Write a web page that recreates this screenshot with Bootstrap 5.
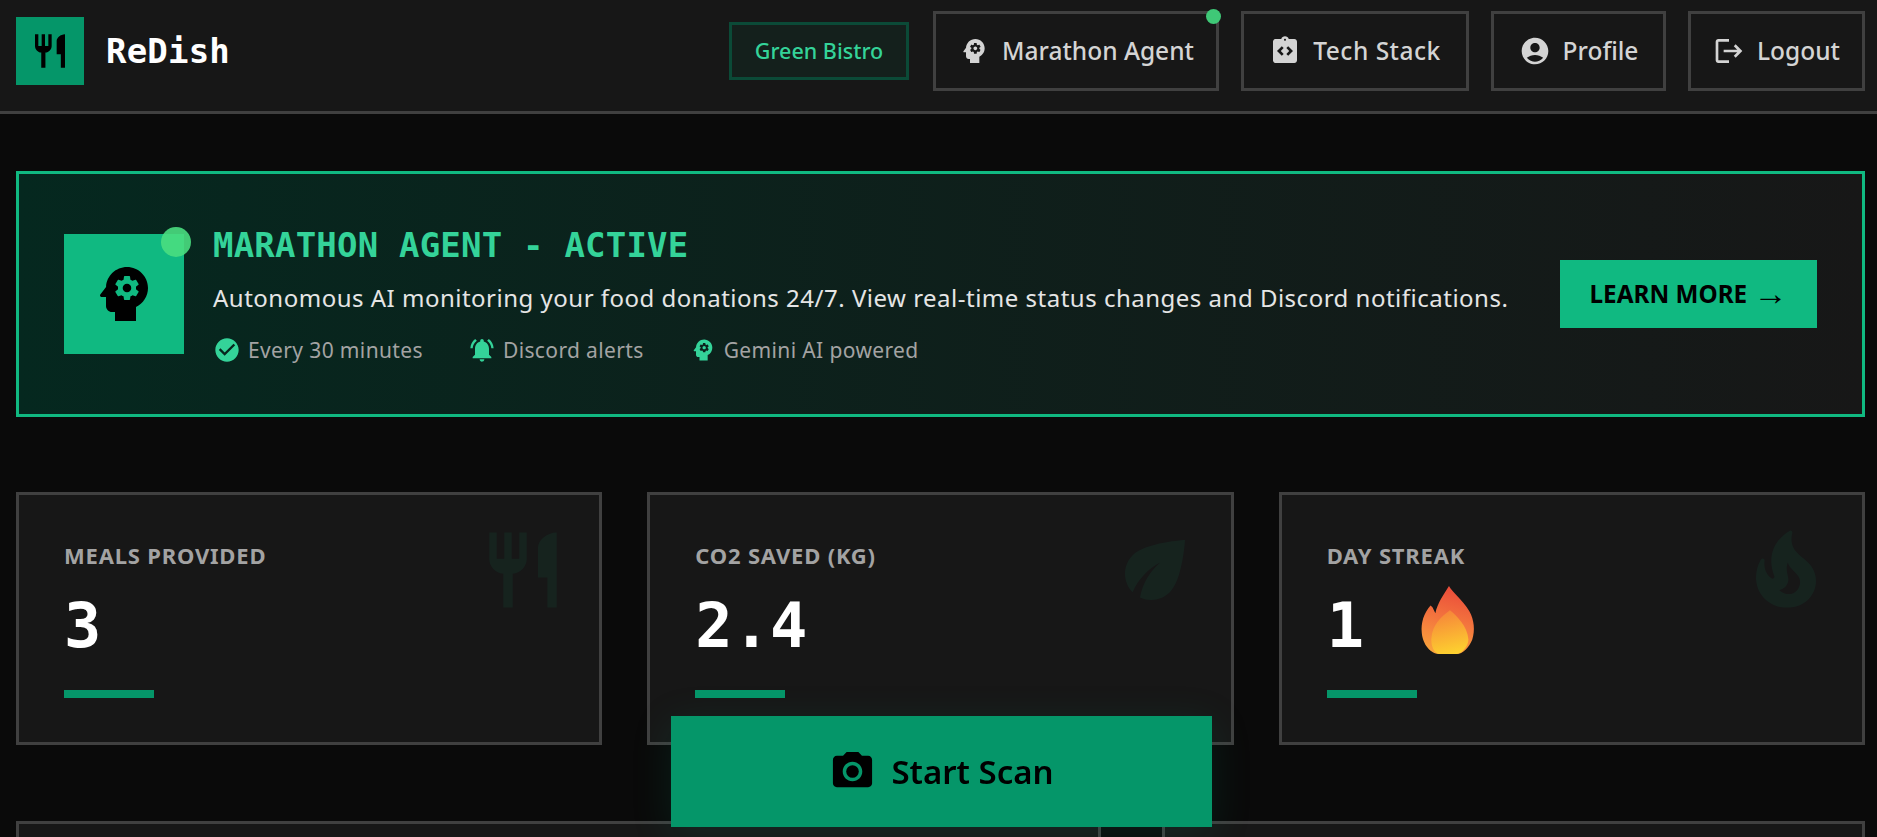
<!DOCTYPE html>
<html lang="en">
<head>
<meta charset="UTF-8" />
<title>ReDish</title>
<link href="https://cdn.jsdelivr.net/npm/bootstrap@5.3.0/dist/css/bootstrap.min.css" rel="stylesheet" />
<style>
  html, body { height: 100%; overflow: hidden; }
  body { background: #0a0a0a; color: #e5e5e5; font-family: "Noto Sans", "Liberation Sans", sans-serif; }
  .app-header { background: #171717; border-bottom: 3px solid #404040; height: 114px; padding: 11px 12px 20px 16px; }
  .logo-box { width: 68px; height: 68px; background: #059669; }
  .logo-box svg { width: 40px; height: 40px; }
  .brand-name { font-family: "DejaVu Sans Mono", monospace; font-weight: 700; font-size: 34px; color: #fff; margin-left: 22px; letter-spacing: .2px; }
  .org-tag { width: 180px; height: 58px; border: 3px solid #0b4a37; background: #14201c; color: #34d399; font-size: 21.5px; font-weight: 500; margin-right: 24px; }
  .head-btn { height: 80px; padding: 0; border: 3px solid #404040; background: transparent; color: #d4d4d4; font-size: 24.5px; font-weight: 500; gap: 12px; margin-left: 22px; border-radius: 0; }
  .head-btn svg { width: 32px; height: 32px; fill: #d4d4d4; }
  .head-btn:first-of-type { margin-left: 0; }
  .btn-agent { width: 286px; }
  .btn-stack { width: 228px; }
  .btn-profile { width: 175px; }
  .btn-logout { width: 177px; }
  .btn-stack span { letter-spacing: .5px; }
  .live-dot { position: absolute; width: 15px; height: 15px; border-radius: 50%; background: #3fc877; top: -5px; right: -5px; }
  .page-main { padding: 57px 12px 0 16px; }
  .agent-banner { height: 246px; border: 3px solid #10b981; background: linear-gradient(90deg, #05281f 0%, #171717 100%); padding: 0 45px; }
  .agent-icon { width: 120px; height: 120px; background: #10b981; margin-right: 29px; flex: none; }
  .agent-icon svg { width: 72px; height: 72px; }
  .agent-dot { position: absolute; width: 30px; height: 30px; border-radius: 50%; background: #4ade80; opacity: .9; top: -7px; right: -7px; }
  .agent-text { padding-top: 3px; }
  .agent-title { font-family: "DejaVu Sans Mono", monospace; font-weight: 700; font-size: 34px; letter-spacing: .2px; color: #34d399; line-height: 40px; margin-bottom: 17px; }
  .agent-desc { font-size: 24px; letter-spacing: .5px; line-height: 32px; color: #e5e5e5; margin-bottom: 20px; }
  .agent-meta { font-size: 21px; letter-spacing: .37px; line-height: 32px; color: #a3a3a3; gap: 45px; }
  .agent-meta svg { width: 28px; height: 28px; fill: #34d399; margin-right: 7px; }
  .learn-btn { width: 257px; height: 68px; background: #10b981; color: #000; font-size: 24.3px; font-weight: 700; border: 0; border-radius: 0; flex: none; }
  .learn-arrow { font-family: "Liberation Serif", serif; font-weight: 400; font-size: 34px; line-height: 1; vertical-align: -2px; }
  .stat-grid { display: grid; grid-template-columns: repeat(3, 1fr); gap: 45px; margin-top: 75px; }
  .stat-box { position: relative; height: 253px; background: #171717; border: 3px solid #404040; padding: 45px; }
  .stat-label { font-size: 22px; letter-spacing: .8px; font-weight: 700; color: #a3a3a3; line-height: 30px; text-transform: uppercase; }
  .stat-value { font-family: "DejaVu Sans Mono", monospace; font-weight: 700; font-size: 62px; line-height: 75px; color: #fff; margin-top: 18px; height: 75px; gap: 56px; }
  .stat-value svg { width: 56px; height: 68px; margin-bottom: 12px; }
  .stat-bar { width: 90px; height: 8px; background: #059669; margin-top: 27px; }
  .stat-bg { position: absolute; top: 30px; right: 31px; width: 90px; height: 90px; fill: #10b981; opacity: .07; }
  .lower-grid { display: grid; grid-template-columns: 1085px 703px; gap: 61px; margin-top: 76px; }
  .lower-box { height: 300px; background: #171717; border: 3px solid #404040; }
  .scan-btn { position: fixed; left: 671px; bottom: 10px; width: 541px; height: 111px; background: #059669; color: #000; border: 0; border-radius: 0; font-size: 33px; font-weight: 600; gap: 15px; box-shadow: 0 8px 40px rgba(5,150,105,.15); }
  .scan-btn svg { width: 47px; height: 47px; }
</style>
</head>
<body>
  <header class="app-header d-flex align-items-center justify-content-between">
    <div class="d-flex align-items-center">
      <div class="logo-box d-flex align-items-center justify-content-center">
        <svg viewBox="0 0 24 24"><path d="M11 9H9V2H7v7H5V2H3v7c0 2.12 1.66 3.84 3.75 3.97V22h2.5v-9.03C11.34 12.84 13 11.12 13 9V2h-2v7zm5-3v8h2.5v8H21V2c-2.76 0-5 2.24-5 4z"/></svg>
      </div>
      <span class="brand-name">ReDish</span>
    </div>
    <div class="d-flex align-items-center">
      <span class="org-tag d-flex align-items-center justify-content-center">Green Bistro</span>
      <button class="btn head-btn btn-agent d-flex align-items-center justify-content-center position-relative">
        <svg viewBox="0 0 24 24"><path d="M13 8.57c-.79 0-1.43.64-1.43 1.43s.64 1.43 1.43 1.43 1.43-.64 1.43-1.43-.64-1.43-1.43-1.43z"/><path d="M13 3C9.25 3 6.2 5.94 6.02 9.64L4.1 12.2c-.25.33-.01.8.4.8H6v3c0 1.1.9 2 2 2h1v3h7v-4.68c2.36-1.12 4-3.53 4-6.32 0-3.87-3.13-7-7-7zm3 7c0 .13-.01.26-.02.39l.83.66c.08.06.1.16.05.25l-.8 1.39c-.05.09-.16.12-.24.09l-.99-.4c-.21.16-.43.29-.67.39L14 13.83c-.01.1-.1.17-.2.17h-1.6c-.1 0-.18-.07-.2-.17l-.15-1.06c-.25-.1-.47-.23-.68-.39l-.99.4c-.09.03-.2 0-.25-.09l-.8-1.39c-.05-.08-.03-.19.05-.25l.84-.66c-.01-.13-.02-.26-.02-.39s.02-.27.04-.39l-.85-.66c-.08-.06-.1-.16-.05-.26l.8-1.38c.05-.09.15-.12.24-.09l1 .4c.2-.15.43-.29.67-.39l.15-1.06c.02-.1.1-.17.2-.17h1.6c.1 0 .18.07.2.17l.15 1.06c.24.1.46.23.67.39l1-.4c.09-.03.2 0 .24.09l.8 1.38c.05.09.03.2-.05.26l-.85.66c.03.12.04.25.04.39z"/></svg>
        <span>Marathon Agent</span><span class="live-dot"></span>
      </button>
      <button class="btn head-btn btn-stack d-flex align-items-center justify-content-center">
        <svg viewBox="0 0 24 24"><path d="M19 3h-4.18C14.4 1.84 13.3 1 12 1c-1.3 0-2.4.84-2.82 2H5c-.14 0-.27.01-.4.04-.39.08-.74.28-1.01.55-.18.18-.33.4-.43.64-.1.23-.16.49-.16.77v14c0 .27.06.54.16.78s.25.45.43.64c.27.27.62.47 1.01.55.13.02.26.03.4.03h14c1.1 0 2-.9 2-2V5c0-1.1-.9-2-2-2zm-8 11.17-1.41 1.42L6 12l3.59-3.59L11 9.83 8.83 12 11 14.17zm1-9.92c-.41 0-.75-.34-.75-.75s.34-.75.75-.75.75.34.75.75-.34.75-.75.75zm2.41 11.34L13 14.17 15.17 12 13 9.83l1.41-1.42L18 12l-3.59 3.59z"/></svg>
        <span>Tech Stack</span>
      </button>
      <button class="btn head-btn btn-profile d-flex align-items-center justify-content-center">
        <svg viewBox="0 0 24 24"><path d="M12 2C6.48 2 2 6.48 2 12s4.48 10 10 10 10-4.48 10-10S17.52 2 12 2zm0 4c1.93 0 3.5 1.57 3.5 3.5S13.93 13 12 13s-3.5-1.57-3.5-3.5S10.07 6 12 6zm0 14c-2.03 0-4.43-.82-6.14-2.88C7.55 15.8 9.68 15 12 15s4.45.8 6.14 2.12C16.43 19.18 14.03 20 12 20z"/></svg>
        <span>Profile</span>
      </button>
      <button class="btn head-btn btn-logout d-flex align-items-center justify-content-center">
        <svg viewBox="0 0 24 24"><path d="M17 7l-1.41 1.41L18.17 11H8v2h10.17l-2.58 2.58L17 17l5-5zM4 5h8V3H4c-1.1 0-2 .9-2 2v14c0 1.1.9 2 2 2h8v-2H4V5z"/></svg>
        <span>Logout</span>
      </button>
    </div>
  </header>

  <main class="page-main">
    <section class="agent-banner d-flex align-items-center justify-content-between">
      <div class="d-flex align-items-center">
        <div class="agent-icon position-relative d-flex align-items-center justify-content-center">
          <svg viewBox="0 0 24 24"><path d="M13 8.57c-.79 0-1.43.64-1.43 1.43s.64 1.43 1.43 1.43 1.43-.64 1.43-1.43-.64-1.43-1.43-1.43z"/><path d="M13 3C9.25 3 6.2 5.94 6.02 9.64L4.1 12.2c-.25.33-.01.8.4.8H6v3c0 1.1.9 2 2 2h1v3h7v-4.68c2.36-1.12 4-3.53 4-6.32 0-3.87-3.13-7-7-7zm3 7c0 .13-.01.26-.02.39l.83.66c.08.06.1.16.05.25l-.8 1.39c-.05.09-.16.12-.24.09l-.99-.4c-.21.16-.43.29-.67.39L14 13.83c-.01.1-.1.17-.2.17h-1.6c-.1 0-.18-.07-.2-.17l-.15-1.06c-.25-.1-.47-.23-.68-.39l-.99.4c-.09.03-.2 0-.25-.09l-.8-1.39c-.05-.08-.03-.19.05-.25l.84-.66c-.01-.13-.02-.26-.02-.39s.02-.27.04-.39l-.85-.66c-.08-.06-.1-.16-.05-.26l.8-1.38c.05-.09.15-.12.24-.09l1 .4c.2-.15.43-.29.67-.39l.15-1.06c.02-.1.1-.17.2-.17h1.6c.1 0 .18.07.2.17l.15 1.06c.24.1.46.23.67.39l1-.4c.09-.03.2 0 .24.09l.8 1.38c.05.09.03.2-.05.26l-.85.66c.03.12.04.25.04.39z"/></svg>
          <span class="agent-dot"></span>
        </div>
        <div class="agent-text">
          <div class="agent-title">MARATHON AGENT - ACTIVE</div>
          <div class="agent-desc">Autonomous AI monitoring your food donations 24/7. View real-time status changes and Discord notifications.</div>
          <div class="agent-meta d-flex">
            <span class="d-flex align-items-center"><svg viewBox="0 0 24 24"><path d="M12 2C6.48 2 2 6.48 2 12s4.48 10 10 10 10-4.48 10-10S17.52 2 12 2zm-2 15l-5-5 1.41-1.41L10 14.17l7.59-7.59L19 8l-9 9z"/></svg>Every 30 minutes</span>
            <span class="d-flex align-items-center"><svg viewBox="0 0 24 24"><path d="M7.58 4.08L6.15 2.65C3.75 4.48 2.17 7.3 2.03 10.5h2c.15-2.65 1.51-4.97 3.55-6.42zm12.39 6.42h2c-.15-3.2-1.73-6.02-4.12-7.85l-1.42 1.43c2.02 1.45 3.39 3.77 3.54 6.42zM18 11c0-3.07-1.64-5.64-4.5-6.32V4c0-.83-.67-1.5-1.5-1.5s-1.5.67-1.5 1.5v.68C7.63 5.36 6 7.92 6 11v5l-2 2v1h16v-1l-2-2v-5zm-6 11c.14 0 .27-.01.4-.04.65-.14 1.18-.58 1.44-1.18.1-.24.15-.5.15-.78h-4c.01 1.1.9 2 2.01 2z"/></svg>Discord alerts</span>
            <span class="d-flex align-items-center"><svg viewBox="0 0 24 24"><path d="M13 8.57c-.79 0-1.43.64-1.43 1.43s.64 1.43 1.43 1.43 1.43-.64 1.43-1.43-.64-1.43-1.43-1.43z"/><path d="M13 3C9.25 3 6.2 5.94 6.02 9.64L4.1 12.2c-.25.33-.01.8.4.8H6v3c0 1.1.9 2 2 2h1v3h7v-4.68c2.36-1.12 4-3.53 4-6.32 0-3.87-3.13-7-7-7zm3 7c0 .13-.01.26-.02.39l.83.66c.08.06.1.16.05.25l-.8 1.39c-.05.09-.16.12-.24.09l-.99-.4c-.21.16-.43.29-.67.39L14 13.83c-.01.1-.1.17-.2.17h-1.6c-.1 0-.18-.07-.2-.17l-.15-1.06c-.25-.1-.47-.23-.68-.39l-.99.4c-.09.03-.2 0-.25-.09l-.8-1.39c-.05-.08-.03-.19.05-.25l.84-.66c-.01-.13-.02-.26-.02-.39s.02-.27.04-.39l-.85-.66c-.08-.06-.1-.16-.05-.26l.8-1.38c.05-.09.15-.12.24-.09l1 .4c.2-.15.43-.29.67-.39l.15-1.06c.02-.1.1-.17.2-.17h1.6c.1 0 .18.07.2.17l.15 1.06c.24.1.46.23.67.39l1-.4c.09-.03.2 0 .24.09l.8 1.38c.05.09.03.2-.05.26l-.85.66c.03.12.04.25.04.39z"/></svg>Gemini AI powered</span>
          </div>
        </div>
      </div>
      <button class="btn learn-btn">LEARN MORE <span class="learn-arrow">→</span></button>
    </section>

    <section class="stat-grid">
      <div class="stat-box">
        <svg class="stat-bg" viewBox="0 0 24 24"><path d="M11 9H9V2H7v7H5V2H3v7c0 2.12 1.66 3.84 3.75 3.97V22h2.5v-9.03C11.34 12.84 13 11.12 13 9V2h-2v7zm5-3v8h2.5v8H21V2c-2.76 0-5 2.24-5 4z"/></svg>
        <div class="stat-label">Meals Provided</div>
        <div class="stat-value d-flex align-items-center">3</div>
        <div class="stat-bar"></div>
      </div>
      <div class="stat-box">
        <svg class="stat-bg" viewBox="0 0 24 24"><path d="M6.05 8.05c-2.73 2.73-2.73 7.15-.02 9.88 1.47-3.4 4.09-6.24 7.36-7.93-2.77 2.34-4.71 5.61-5.39 9.32 2.6 1.23 5.8.78 7.95-1.37C19.43 14.47 20 4 20 4S9.53 4.57 6.05 8.05z"/></svg>
        <div class="stat-label">CO2 Saved (kg)</div>
        <div class="stat-value d-flex align-items-center">2.4</div>
        <div class="stat-bar"></div>
      </div>
      <div class="stat-box">
        <svg class="stat-bg" viewBox="0 0 24 24"><path d="M19.48 12.35c-1.57-4.08-7.16-4.3-5.81-10.23.1-.44-.37-.78-.75-.55C9.29 3.71 6.68 8 8.87 13.62c.18.46-.36.89-.75.59-1.81-1.37-2-3.34-1.84-4.75.06-.52-.62-.77-.91-.34C4.69 10.16 4 11.84 4 14.37c.38 5.6 5.11 7.32 6.81 7.54 2.43.31 5.06-.14 6.95-1.87 2.08-1.93 2.84-5.01 1.72-7.69zm-9.28 5.03c1.44-.35 2.18-1.39 2.38-2.31.33-1.43-.96-2.83-.09-5.09.33 1.87 3.27 3.04 3.27 5.08.08 2.53-2.66 4.7-5.56 2.32z"/></svg>
        <div class="stat-label">Day Streak</div>
        <div class="stat-value d-flex align-items-center">1
          <svg viewBox="0 0 56 70">
            <defs>
              <linearGradient id="fireOuter" x1="0.6" y1="0" x2="0.4" y2="1"><stop offset="0" stop-color="#ea4a3a"/><stop offset=".55" stop-color="#f4793e"/><stop offset="1" stop-color="#f9a33b"/></linearGradient>
              <linearGradient id="fireInner" x1="0.4" y1="0" x2="0.6" y2="1"><stop offset="0" stop-color="#f6843a"/><stop offset="1" stop-color="#fdd22f"/></linearGradient>
            </defs>
            <path fill="url(#fireOuter)" d="M29 0c3 6 14 14 21 26 5 9 6 20 3 29-3 8-10 15-16 15H20C10 70 2 60 1 48c-1-10 2-20 9-28l2 2 3 6C17 18 24 8 29 0z"/>
            <path fill="url(#fireInner)" d="M30 25c7 6 18 16 19 30 0 7-7 15-13 15H19C13 69 10 60 11 53c1-12 9-21 19-28z"/>
          </svg>
        </div>
        <div class="stat-bar"></div>
      </div>
    </section>

    <section class="lower-grid">
      <div class="lower-box"></div>
      <div class="lower-box"></div>
    </section>
  </main>

  <button class="btn scan-btn d-flex align-items-center justify-content-center">
    <svg viewBox="0 0 24 24"><path d="M9 2L7.17 4H4c-1.1 0-2 .9-2 2v12c0 1.1.9 2 2 2h16c1.1 0 2-.9 2-2V6c0-1.1-.9-2-2-2h-3.17L15 2H9zm3 15c-2.76 0-5-2.24-5-5s2.24-5 5-5 5 2.24 5 5-2.24 5-5 5z"/><circle cx="12" cy="12" r="3.2"/></svg>
    Start Scan
  </button>

  <script src="https://cdn.jsdelivr.net/npm/bootstrap@5.3.0/dist/js/bootstrap.bundle.min.js"></script>
</body>
</html>
